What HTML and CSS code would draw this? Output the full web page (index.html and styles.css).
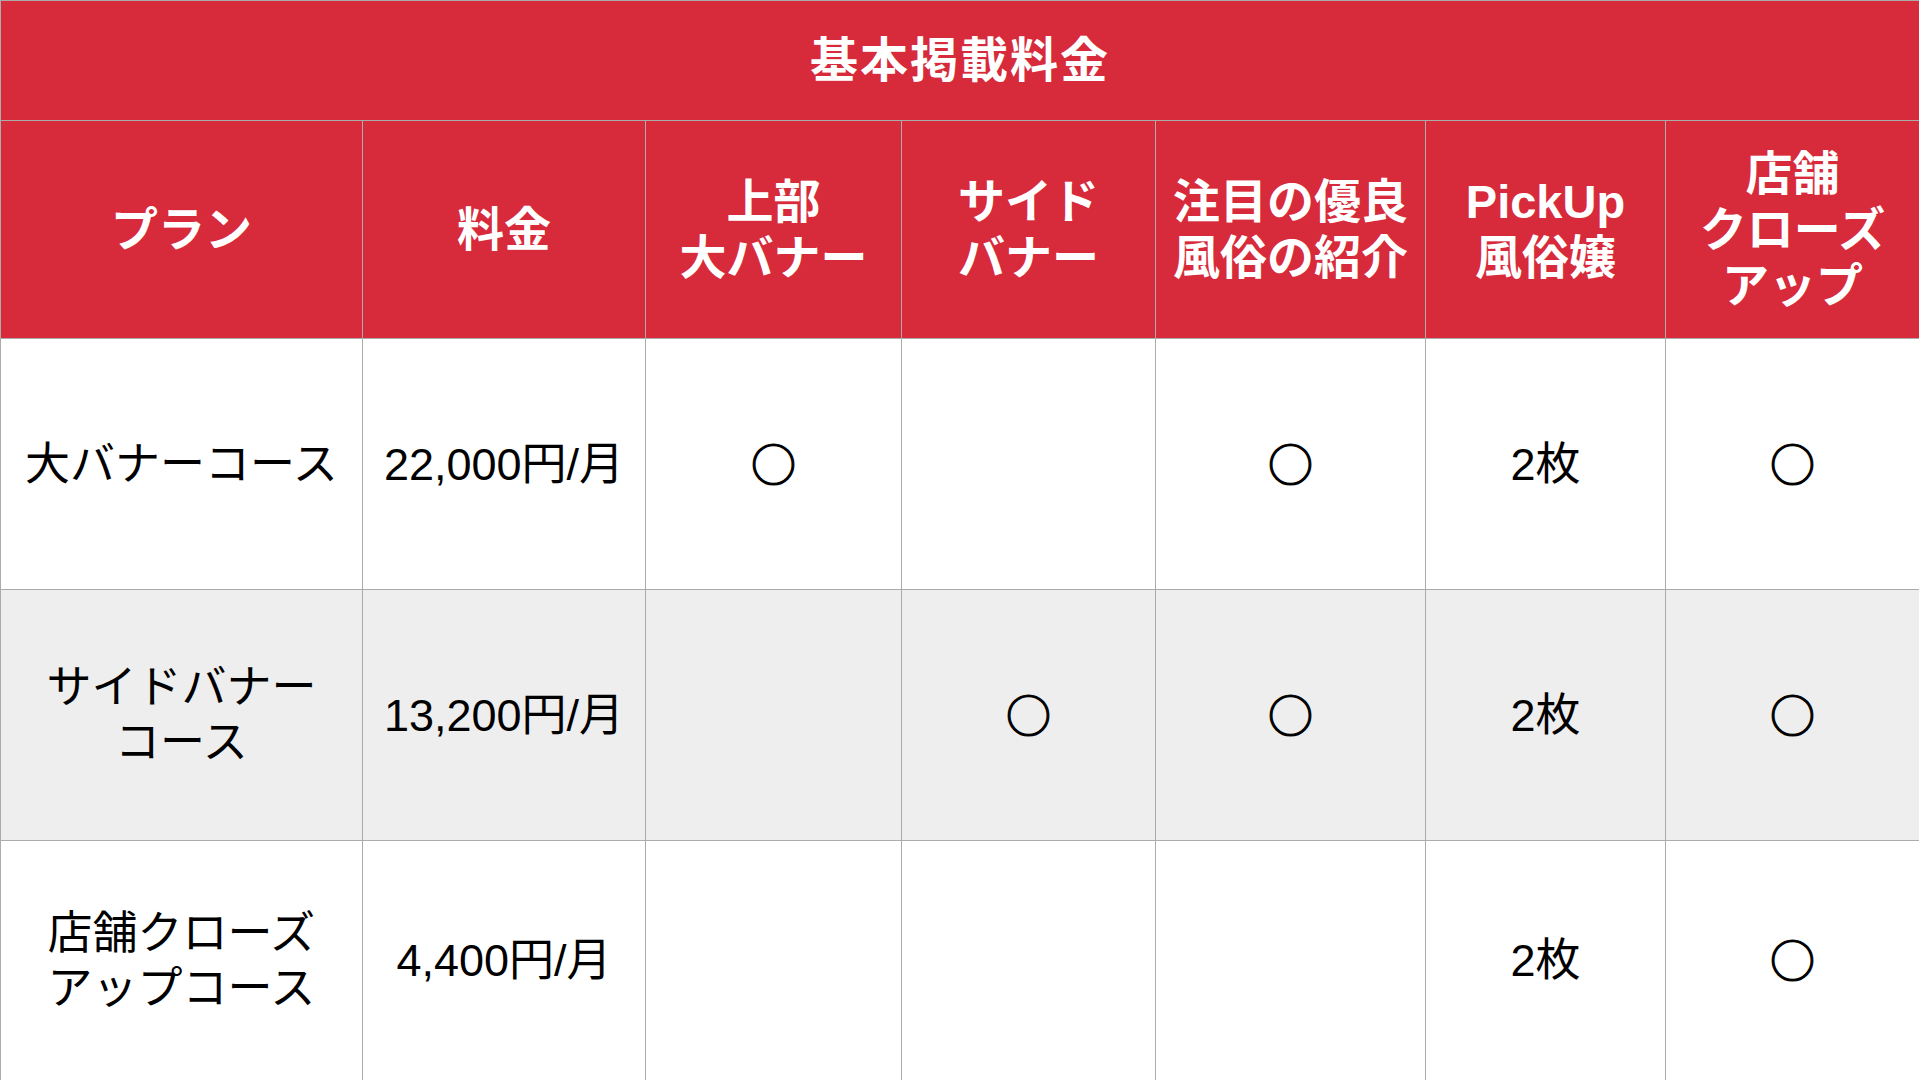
FILE: index.html
```html
<!DOCTYPE html>
<html lang="ja">
<head>
<meta charset="utf-8">
<title>基本掲載料金</title>
<link rel="stylesheet" href="styles.css">
</head>
<body>
<table class="price-table">
  <colgroup>
    <col class="c1"><col class="c2"><col class="c3"><col class="c4"><col class="c5"><col class="c6"><col class="c7">
  </colgroup>
  <thead>
    <tr class="title-row"><th colspan="7">基本掲載料金</th></tr>
    <tr class="head-row">
      <th>プラン</th>
      <th>料金</th>
      <th>上部<br>大バナー</th>
      <th>サイド<br>バナー</th>
      <th>注目の優良<br>風俗の紹介</th>
      <th>PickUp<br>風俗嬢</th>
      <th>店舗<br>クローズ<br>アップ</th>
    </tr>
  </thead>
  <tbody>
    <tr class="row r1">
      <td>大バナーコース</td>
      <td>22,000円/月</td>
      <td><span class="mark">○</span></td>
      <td></td>
      <td><span class="mark">○</span></td>
      <td>2枚</td>
      <td><span class="mark">○</span></td>
    </tr>
    <tr class="row r2 alt">
      <td>サイドバナー<br>コース</td>
      <td>13,200円/月</td>
      <td></td>
      <td><span class="mark">○</span></td>
      <td><span class="mark">○</span></td>
      <td>2枚</td>
      <td><span class="mark">○</span></td>
    </tr>
    <tr class="row r3">
      <td>店舗クローズ<br>アップコース</td>
      <td>4,400円/月</td>
      <td></td>
      <td></td>
      <td></td>
      <td>2枚</td>
      <td><span class="mark">○</span></td>
    </tr>
  </tbody>
</table>
</body>
</html>
```

FILE: styles.css
```css
html, body {
  margin: 0;
  padding: 0;
  background: #ffffff;
  overflow: hidden;
}

.price-table {
  width: 1919px;
  border-collapse: collapse;
  table-layout: fixed;
  font-family: "Liberation Sans", "Noto Sans CJK JP", sans-serif;
}

.c1 { width: 362px; }
.c2 { width: 283px; }
.c3 { width: 256px; }
.c4 { width: 254px; }
.c5 { width: 270px; }
.c6 { width: 240px; }
.c7 { width: 254px; }

.price-table th,
.price-table td {
  border: 1px solid #ababab;
  text-align: center;
  vertical-align: middle;
  padding: 0;
}

.price-table th {
  background: #d72a3a;
  color: #ffffff;
  font-weight: bold;
  font-size: 47px;
  line-height: 56px;
}

.title-row th {
  height: 119px;
  font-size: 48px;
  letter-spacing: 2px;
}

.head-row th {
  height: 217px;
}

.row td {
  font-size: 45px;
  line-height: 55px;
  color: #000000;
  background: #ffffff;
}

.row.alt td {
  background: #eeeeee;
}

.mark {
  font-family: "Noto Sans CJK JP", sans-serif;
  font-size: 45px;
  -webkit-text-stroke: 1.2px #000000;
}

.r1 td { height: 250px; }
.r2 td { height: 250px; }
.r3 td { height: 239px; }
```
